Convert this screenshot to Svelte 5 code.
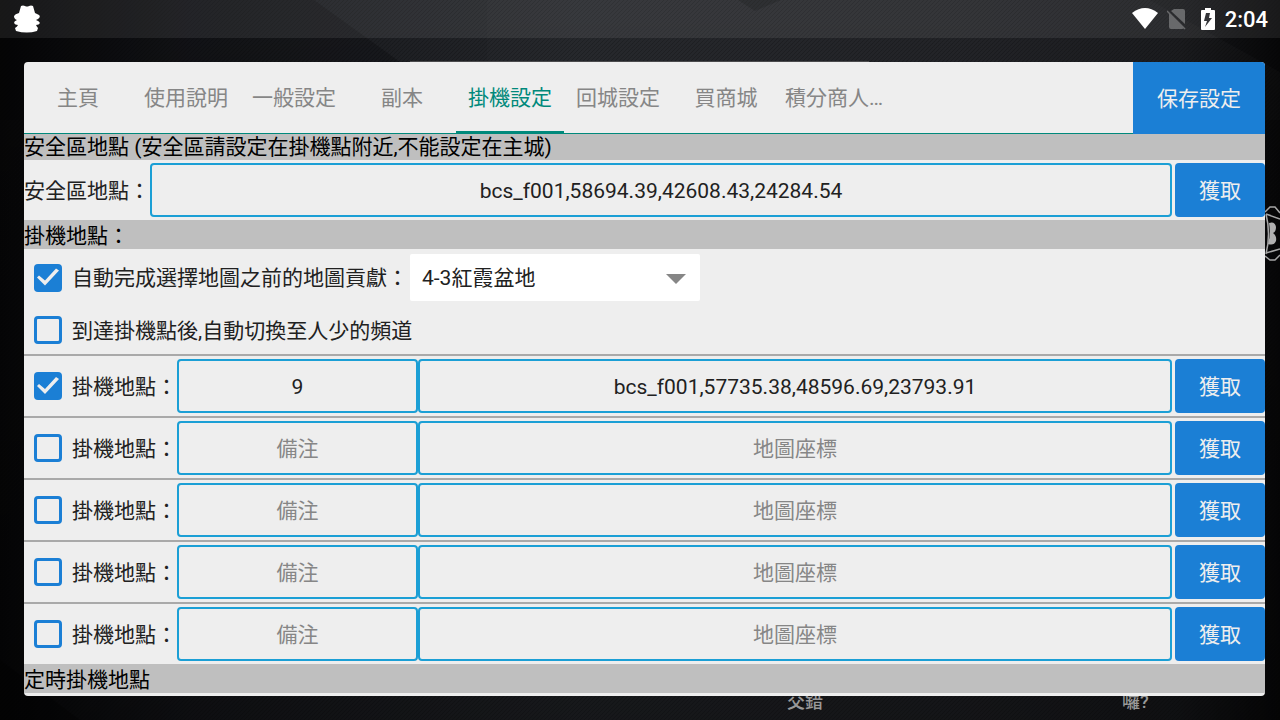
<script lang="ts">
  interface Spot {
    enabled: boolean;
    note: string;
    coords: string;
  }

  const TABS = ['主頁', '使用說明', '一般設定', '副本', '掛機設定', '回城設定', '買商城', '積分商人…'];
  const MAPS = ['4-3紅霞盆地'];

  let activeTab = $state('掛機設定');
  let safeZone = $state('bcs_f001,58694.39,42608.43,24284.54');
  let autoContribute = $state(true);
  let autoChannel = $state(false);
  let map = $state(MAPS[0]);
  let spots: Spot[] = $state([
    { enabled: true, note: '9', coords: 'bcs_f001,57735.38,48596.69,23793.91' },
    { enabled: false, note: '', coords: '' },
    { enabled: false, note: '', coords: '' },
    { enabled: false, note: '', coords: '' },
    { enabled: false, note: '', coords: '' },
  ]);
</script>

<div class="screen">
  <svg class="wallpaper" viewBox="0 0 1280 720" preserveAspectRatio="none" aria-hidden="true">
    <defs>
      <linearGradient id="base" x1="0" x2="1" y1="0" y2="0">
        <stop offset="0" stop-color="#060607" />
        <stop offset="0.15" stop-color="#15161a" />
        <stop offset="0.45" stop-color="#232529" />
        <stop offset="0.75" stop-color="#1f2024" />
        <stop offset="0.92" stop-color="#17181b" />
        <stop offset="1" stop-color="#070708" />
      </linearGradient>
      <linearGradient id="fade" x1="0" x2="0" y1="0" y2="1">
        <stop offset="0" stop-color="#000" stop-opacity="0" />
        <stop offset="1" stop-color="#000" stop-opacity="0.35" />
      </linearGradient>
      <pattern id="weave" width="4" height="4" patternUnits="userSpaceOnUse">
        <path d="M0 4L4 0" stroke="#000" stroke-opacity="0.2" />
      </pattern>
    </defs>
    <rect width="1280" height="720" fill="url(#base)" />
    <path d="M0 0H314L400 62V120H0Z" fill="#000" opacity="0.15" />
    <path d="M314 0H487V120H480L400 62Z" fill="#fff" opacity="0.01" />
    <path d="M487 0H1150L1280 72V120H487Z" fill="#fff" opacity="0.02" />
    <path d="M738 0H781L755 11Z" fill="#000" opacity="0.2" />
    <path d="M0 660L80 720H0Z" fill="#000" opacity="0.3" />
    <rect width="1280" height="720" fill="url(#fade)" />
    <rect width="1280" height="720" fill="url(#weave)" />
    <path d="M410 61.500H869" stroke="#4a4a4c" />
  </svg>

  <span class="behind first">交錯</span>
  <span class="behind second">囉?</span>
  <svg class="side-handle" viewBox="0 0 15 56" aria-hidden="true">
    <path d="M1 8Q6 28 1 48M0 6L5 1H10L15 7M1 8L15 13M0 50L5 54H10L15 49M1 47L15 43" fill="none" stroke="#a5a5a5" stroke-width="1.500" />
    <path d="M4 17Q10 15 11 21Q11 26 8 27Q12 30 11 35Q9 40 3 38Q6 28 4 17Z" fill="#b0b0b0" />
  </svg>

  <header class="status">
    <svg class="app-icon" width="28" height="28" viewBox="0 0 28 28" aria-hidden="true">
      <path d="M8 1Q10 0 12 1Q14 2 16 1Q18 0 20 1L22 8L26 10Q28 12 25 14L23 15Q26 16 27 18Q26 20 23 20Q24 22 25 23L24 26Q14 29 3 26L2 23Q4 22 5 20Q2 20 1 18Q1 16 4 15Q1 14 1 11Q2 9 6 8Z" fill="#fff" />
    </svg>
    <div class="status-icons">
      <svg width="26" height="22" viewBox="0 0 26 22" aria-hidden="true">
        <path d="M0 5Q13 -5 26 5L13 21Z" fill="#fff" />
      </svg>
      <svg class="sim" width="20" height="22" viewBox="0 0 20 22" aria-hidden="true">
        <path d="M7 1H16Q18 1 18 3V16L4 3ZM2 5L17 20Q16 21 15 21H4Q2 21 2 19Z" fill="#68696b" />
        <path d="M0 3L18 21" stroke="#68696b" stroke-width="1.500" />
      </svg>
      <svg class="battery" width="14" height="22" viewBox="0 0 14 22" aria-hidden="true">
        <path d="M4 0H10V2H13Q14 2 14 3V21Q14 22 13 22H1Q0 22 0 21V3Q0 2 1 2H4Z" fill="#fff" />
        <path d="M9 5H5L3 13H6L4 19L11 10H8Z" fill="#333438" />
      </svg>
      <span class="clock">2:04</span>
    </div>
  </header>

  <main class="panel">
    <div class="topbar">
      <nav class="tabs">
        {#each TABS as tab}
          <button class="tab" class:active={tab === activeTab} onclick={() => (activeTab = tab)}>{tab}</button>
        {/each}
      </nav>
      <button class="save">保存設定</button>
    </div>

    <h2 class="heading compact">安全區地點 (安全區請設定在掛機點附近,不能設定在主城)</h2>
    <div class="row">
      <label class="text" for="safe-zone">安全區地點：</label>
      <input id="safe-zone" class="field" type="text" bind:value={safeZone} />
      <button class="fetch">獲取</button>
    </div>

    <h2 class="heading">掛機地點：</h2>
    <div class="option map-option">
      <label class="check">
        <input type="checkbox" bind:checked={autoContribute} />
        <span>自動完成選擇地圖之前的地圖貢獻：</span>
      </label>
      <div class="picker">
        <select aria-label="地圖" bind:value={map}>
          {#each MAPS as name}
            <option value={name}>{name}</option>
          {/each}
        </select>
        <svg class="arrow" width="20" height="10" viewBox="0 0 20 10" aria-hidden="true">
          <path d="M0 0H20L10 10Z" fill="#868686" />
        </svg>
      </div>
    </div>
    <div class="option">
      <label class="check">
        <input type="checkbox" bind:checked={autoChannel} />
        <span class="text">到達掛機點後,自動切換至人少的頻道</span>
      </label>
    </div>

    {#each spots as spot}
      <div class="row spot">
        <label class="check">
          <input type="checkbox" bind:checked={spot.enabled} />
          <span class="text">掛機地點：</span>
        </label>
        <input class="field note" type="text" aria-label="備注" placeholder="備注" bind:value={spot.note} />
        <input class="field" type="text" aria-label="地圖座標" placeholder="地圖座標" bind:value={spot.coords} />
        <button class="fetch">獲取</button>
      </div>
    {/each}

    <h2 class="heading">定時掛機地點</h2>
  </main>
</div>

<style>
  :global(body) { background: #0c0d0f; }
  .screen {
    position: relative;
    min-height: 100vh;
    box-sizing: border-box;
    padding-bottom: 24px;
    overflow: hidden;
    font-family: Roboto, "Noto Sans CJK JP", sans-serif;
    font-size: 21px;
    line-height: 26px;
    color: #212121;
  }
  button, input, select { font: inherit; }
  button { padding: 0; border: 0; cursor: pointer; }

  .wallpaper { position: absolute; top: 0; left: 0; width: 100%; height: 100%; }
  .behind { position: absolute; bottom: 5px; font-size: 18px; font-weight: 500; color: #999; }
  .first { left: 787px; }
  .second { left: 1122px; }
  .side-handle { position: absolute; top: 206px; right: 0; width: 15px; height: 56px; }

  .status {
    position: relative;
    display: flex;
    align-items: center;
    justify-content: space-between;
    height: 38px;
    padding: 0 12px 0 13px;
    background: rgba(255, 255, 255, 0.08);
  }
  .status-icons { display: flex; align-items: center; }
  .sim { margin-left: 9px; }
  .battery { margin-left: 14px; }
  .clock { margin-left: 10px; padding-top: 2px; font-size: 22px; font-weight: 500; color: #fff; }

  .panel {
    position: relative;
    margin: 24px 15px 0 24px;
    padding-bottom: 3px;
    border-radius: 4px;
    background: #eee;
    overflow: hidden;
  }
  .topbar { display: flex; height: 72px; }
  .tabs { display: flex; flex: 1; box-sizing: border-box; border-bottom: 1px solid #00897b; }
  .tab {
    box-sizing: border-box;
    width: 108px;
    background: none;
    color: #868686;
    white-space: nowrap;
  }
  .tab.active { color: #00897b; box-shadow: inset 0 -2px #00897b; }
  .save { width: 132px; padding-top: 2px; background: #1b7fd5; color: #eee; }

  .heading {
    box-sizing: border-box;
    margin: 0;
    height: 29px;
    padding-top: 3px;
    background: #bfbfbf;
    color: #000;
    font-size: 21px;
    font-weight: 400;
    line-height: 26px;
  }
  .compact { height: 26px; padding-top: 0; }

  .text { padding-top: 2px; }
  .row { display: flex; align-items: center; padding: 3px 0; }
  .spot { border-top: 2px solid #a9a9a9; }
  .field {
    flex: 1;
    box-sizing: border-box;
    min-width: 0;
    height: 54px;
    padding: 2px 2px 0;
    border: 2px solid #1b9fd5;
    border-radius: 4px;
    background: transparent;
    color: #212121;
    text-align: center;
  }
  .field::placeholder { color: #868686; opacity: 1; }
  .note { flex: 0 0 241px; }
  .fetch {
    width: 90px;
    height: 54px;
    margin-left: 3px;
    padding-top: 2px;
    border-radius: 4px;
    background: #1b7fd5;
    color: #eee;
  }

  .option { display: flex; align-items: center; height: 48px; }
  .map-option { height: 57px; gap: 2px; }
  .check { display: flex; align-items: center; gap: 10px; padding-left: 10px; }
  .check input {
    appearance: none;
    box-sizing: border-box;
    width: 28px;
    height: 28px;
    margin: 0;
    border: 3px solid #1b7fd5;
    border-radius: 4px;
  }
  .check input:checked { border: 0; background: #1b7fd5; }
  .check input:checked::before {
    content: '';
    display: block;
    width: 28px;
    height: 28px;
    background: #eee;
    clip-path: polygon(3px 14px, 5px 12px, 11px 17px, 22px 5px, 25px 7px, 11px 22px);
  }

  .picker { position: relative; width: 290px; }
  select {
    appearance: none;
    display: block;
    width: 100%;
    height: 47px;
    padding: 0 40px 0 12px;
    border: 0;
    border-radius: 2px;
    background: #fff;
    color: #212121;
  }
  .arrow { position: absolute; top: 20px; right: 14px; pointer-events: none; }
</style>
